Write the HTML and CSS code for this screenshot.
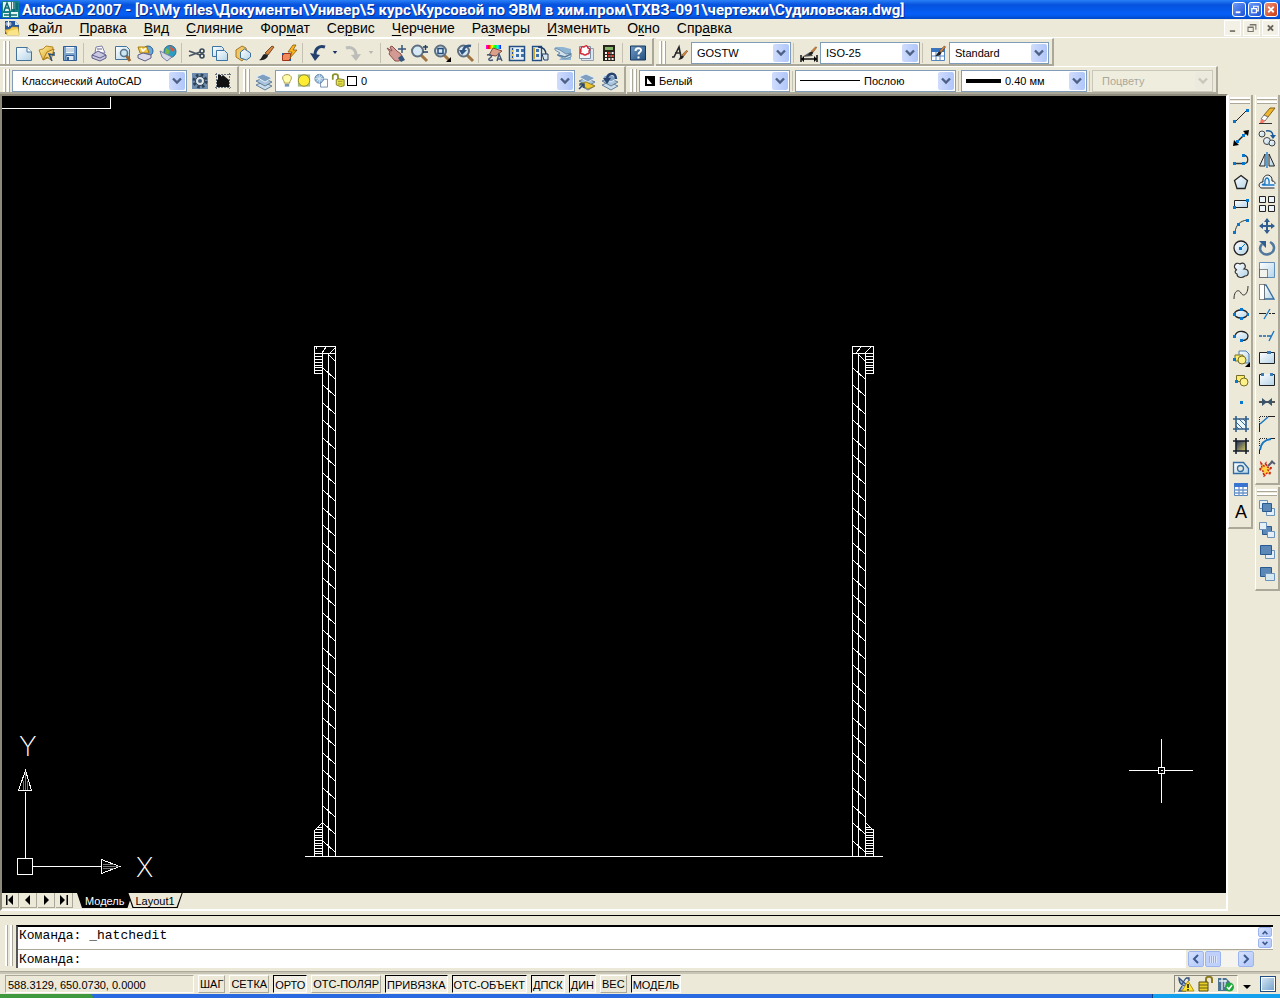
FILE: index.html
```html
<!DOCTYPE html>
<html lang="ru">
<head>
<meta charset="utf-8">
<title>AutoCAD 2007</title>
<link rel="stylesheet" href="styles.css">
</head>
<body>
<svg class="defs" aria-hidden="true">
  <defs>
    <linearGradient id="paper" x1="0" y1="0" x2="1" y2="1"><stop offset="0" stop-color="#ffffff"/><stop offset="1" stop-color="#b4d4e8"/></linearGradient>
    <linearGradient id="steel" x1="0" y1="0" x2="1" y2="1"><stop offset="0" stop-color="#6f9ac6"/><stop offset="1" stop-color="#24507f"/></linearGradient>
    <linearGradient id="gold" x1="0" y1="0" x2="1" y2="1"><stop offset="0" stop-color="#fff3a0"/><stop offset="1" stop-color="#d79a1c"/></linearGradient>
    <linearGradient id="night" x1="0" y1="0" x2="1" y2="1"><stop offset="0" stop-color="#1a2c5c"/><stop offset="1" stop-color="#d8c860"/></linearGradient>
    <linearGradient id="rainbow"><stop offset="0" stop-color="#f0f"/><stop offset=".2" stop-color="#f00"/><stop offset=".4" stop-color="#ff0"/><stop offset=".6" stop-color="#0f0"/><stop offset=".8" stop-color="#0ff"/><stop offset="1" stop-color="#00f"/></linearGradient>
    <symbol id="chev" viewBox="0 0 10 8"><path d="M1 1.5l4 4 4-4" fill="none" stroke="currentColor" stroke-width="2.4"/></symbol>
    <symbol id="brush" viewBox="0 0 20 20"><path d="M9 10l7-7 2 1-6 8z" fill="#d9853b" stroke="#5a3418" stroke-width=".8"/><path d="M3 17c3-1 3-6 6-6l3 1c0 3-4 6-9 5z" fill="#222"/></symbol>
    <symbol id="lens" viewBox="0 0 20 20"><path d="M12 12l6 6" stroke="#a07440" stroke-width="3"/><circle cx="8.500" cy="8" r="5.500" fill="#d7e9f4" stroke="#5e6f80" stroke-width="2"/></symbol>
    <symbol id="sheets" viewBox="0 0 20 20"><path d="M2 14l7-3 9 4-7 4z" fill="#c9dcec" stroke="#657f9b"/><path d="M2 10l7-3 9 4-7 4z" fill="#a9c4dd" stroke="#657f9b"/><path d="M2 6l7-3 9 4-7 4z" fill="#7f9fc1" stroke="#e2eef6"/></symbol>
  </defs>
</svg>

<header class="titlebar">
  <svg class="app-icon" viewBox="0 0 17 17"><path fill="#177f86" d="M0 0h17v17H0z"/><path fill="#e5f5f2" d="M1 1h8v9H1zM10 1h3v7h-3zM1 12h6v4H1zM9 11h7v5H9z"/><path d="M2 10l3-8 3 8M3 7h4M12 1v10M15 2v7M2 14h13" fill="none" stroke="#0a6971" stroke-width="1.500"/></svg>
  <h1>AutoCAD 2007 - [D:\My files\Документы\Универ\5 курс\Курсовой по ЭВМ в хим.пром\ТХВЗ-091\чертежи\Судиловская.dwg]</h1>
  <div class="window-buttons">
    <button aria-label="Свернуть"><svg viewBox="0 0 13 13"><path d="M3 9.500h5" stroke="#fff" stroke-width="2"/></svg></button>
    <button aria-label="Восстановить"><svg viewBox="0 0 13 13"><path d="M5 5V3h5v5H8M3 5.500h5V10H3z" fill="none" stroke="#fff" stroke-width="1.300"/></svg></button>
    <button class="close" aria-label="Закрыть"><svg viewBox="0 0 13 13"><path d="M3.500 3.500l6 6m0-6l-6 6" stroke="#fff" stroke-width="2"/></svg></button>
  </div>
</header>

<nav class="menubar">
  <svg class="doc-icon" viewBox="0 0 16 16"><path d="M1 1h10l4 4v9H1z" fill="#28569a"/><path d="M11 1l4 4h-4z" fill="#dbe8f4"/><path d="M4.500 1v6M1.500 4h6M2.500 2l4 4M6.500 2l-4 4" stroke="#fff"/><path d="M1 10l5-1 2-2h6l1 8H3z" fill="#f3cd50" stroke="#b98e20" stroke-width=".6"/><path d="M3 15l2-4 9-2 1 6z" fill="#fae48a"/></svg>
  <button><u>Ф</u>айл</button><button><u>П</u>равка</button><button><u>В</u>ид</button><button><u>С</u>лияние</button><button>Фор<u>м</u>ат</button><button>Се<u>р</u>вис</button><button><u>Ч</u>ерчение</button><button>Ра<u>з</u>меры</button><button><u>И</u>зменить</button><button>О<u>к</u>но</button><button>Спр<u>а</u>вка</button>
  <div class="doc-buttons">
    <button aria-label="Свернуть чертёж"><svg viewBox="0 0 16 16"><path d="M5 11.500h6" stroke="#77756b" stroke-width="2"/></svg></button>
    <button aria-label="Восстановить чертёж"><svg viewBox="0 0 16 16"><path d="M6 4h7v6M6 4.500h7M4 7h6v5H4zM4 7.500h6" fill="none" stroke="#77756b" stroke-width="1.200"/></svg></button>
    <button aria-label="Закрыть чертёж"><svg viewBox="0 0 16 16"><path d="M5 5l6 6m0-6l-6 6" stroke="#66645c" stroke-width="2.200"/></svg></button>
  </div>
</nav>

<div class="toolrow">
  <div class="toolbar">
    <i class="grip"></i>
    <button class="tool" aria-label="Создать"><svg viewBox="0 0 20 20"><path d="M2.500 4.500h11l4 4v9h-15z" fill="url(#paper)" stroke="#44749c"/><path d="M13 4v5h5" fill="#fff" stroke="#44749c"/></svg></button>
    <button class="tool" aria-label="Открыть"><svg viewBox="0 0 20 20"><path d="M2 7l4-1 3-3 7 1-1 9-9 4z" fill="url(#gold)" stroke="#b98922"/><path d="M6 17l4-8 7-3-3 11-4-3z" fill="#f6d578" stroke="#a9781a"/><path d="M17 9v3l-5-1 3 7" fill="none" stroke="#2b4f7c" stroke-width="1.500"/></svg></button>
    <button class="tool" aria-label="Сохранить"><svg viewBox="0 0 20 20"><path d="M3.500 3.500h13v14h-13z" fill="#7fa5cf" stroke="#2f5e96"/><path d="M6 4h8v6H6z" fill="#f2f7fb"/><path d="M6 6h8M6 8h8" stroke="#9bb5cd"/><path d="M6 12.500h8v5H6z" fill="#dfe9f2" stroke="#2f5e96"/><path d="M8 14v3" stroke="#2f5e96" stroke-width="2"/></svg></button>
    <i class="sep"></i>
    <button class="tool" aria-label="Печать"><svg viewBox="0 0 20 20"><path d="M6 10l1-6 6-1 3 7z" fill="#fff" stroke="#7c7fa5"/><path d="M3 12l6-4 8 4v3l-6 3-8-3z" fill="#c9c8e0" stroke="#5c5d8a"/><path d="M3 12l8 3 6-3M8 6h5" fill="none" stroke="#5c5d8a"/></svg></button>
    <button class="tool" aria-label="Просмотр"><svg viewBox="0 0 20 20"><path d="M3.500 3.500h11l3 3v10h-14z" fill="url(#paper)" stroke="#44749c"/><path d="M14 12l4 6" stroke="#9c6530" stroke-width="3"/><circle cx="12" cy="10" r="3.500" fill="#cfe5f1" stroke="#56758d" stroke-width="1.500"/></svg></button>
    <button class="tool" aria-label="Публикация"><svg viewBox="0 0 20 20"><circle cx="13" cy="8" r="5" fill="#6ca6d6" stroke="#255f99"/><path d="M3 4h9l2 6H5z" fill="#f3c944" stroke="#a67c12"/><path d="M6 5l2 3 3-3" fill="none" stroke="#fff" stroke-width="1.500"/><path d="M3 12l5-2 8 2v3l-6 3-7-3z" fill="#dcdce8" stroke="#5c5d8a"/></svg></button>
    <button class="tool" aria-label="Веб-публикация"><svg viewBox="0 0 20 20"><circle cx="12" cy="8.500" r="6" fill="#2e9cc6" stroke="#2e6b8c"/><path d="M12 3l5 4-4 2z" fill="#e8502f"/><path d="M8 5l4 3-2 4-3-2z" fill="#75bb46"/><path d="M2 8l6 3 6 3-5 4-5-4z" fill="#d6d9e6" stroke="#7780a2"/></svg></button>
    <i class="sep"></i>
    <button class="tool" aria-label="Вырезать"><svg viewBox="0 0 20 20"><path d="M2 8l11 4M2 13l11-4" stroke="#4b5664" stroke-width="1.600"/><circle cx="15" cy="8" r="2" fill="none" stroke="#38485c" stroke-width="1.600"/><circle cx="15" cy="13" r="2" fill="none" stroke="#38485c" stroke-width="1.600"/></svg></button>
    <button class="tool" aria-label="Копировать"><svg viewBox="0 0 20 20"><path d="M2.500 3.500h9l2 2v8h-11z" fill="url(#paper)" stroke="#3d74a6"/><path d="M6.500 7.500h8l3 3v7h-11z" fill="url(#paper)" stroke="#3d74a6"/></svg></button>
    <button class="tool" aria-label="Вставить"><svg viewBox="0 0 20 20"><path d="M3 7l6-4 4 2 1 7-5 6-6-4z" fill="#efc663" stroke="#a57724"/><path d="M7.500 9l4-3 6 4v4l-4 3-6-2z" fill="url(#paper)" stroke="#3d6f9d"/></svg></button>
    <button class="tool" aria-label="Копировать свойства"><svg viewBox="0 0 20 20"><use href="#brush"/></svg></button>
    <button class="tool" aria-label="Редактор блоков"><svg viewBox="0 0 20 20"><path d="M3.500 10.500h8v7h-8z" fill="#f08a5c" stroke="#a33117"/><path d="M3 10h2v2H3zM10 16h2v2h-2z" fill="#1c5fb0"/><path d="M14 2l-5 7h4l-2 6 7-8h-4l3-5z" fill="#ffb51d" stroke="#875a0c" stroke-width=".8"/></svg></button>
    <i class="sep"></i>
    <button class="tool" aria-label="Отменить"><svg viewBox="0 0 20 20"><path d="M17 4c-6-2-10 2-10 8" fill="none" stroke="#24406f" stroke-width="3"/><path d="M2 10l5 8 5-6z" fill="#24406f"/></svg></button>
    <button class="more" aria-label="Список отмены"><svg viewBox="0 0 8 6"><path d="M1 1h6L4 5z" fill="#183066"/></svg></button>
    <button class="tool" aria-label="Вернуть" disabled><svg viewBox="0 0 20 20"><path d="M3 5c6-2 10 2 10 7" fill="none" stroke="#bcbcb8" stroke-width="3"/><path d="M18 11l-5 7-5-6z" fill="#bcbcb8"/></svg></button>
    <button class="more wide" aria-label="Список возврата" disabled><svg viewBox="0 0 8 6"><path d="M1 1h6L4 5z" fill="#b9b8b0"/></svg></button>
    <i class="sep"></i>
    <button class="tool" aria-label="Панорамирование"><svg viewBox="0 0 20 20"><path d="M1 5l5 3-2-4 2-1 5 5 4 3 1 5-3 2H9L3 11l1-2z" fill="#d29a93" stroke="#8c4f4c"/><path d="M12 15l4-3 3 5-4 2z" fill="#34567e"/><path d="M16 2v8M12 6h8" stroke="#34567e" stroke-width="1.500"/></svg></button>
    <button class="tool" aria-label="Зумирование"><svg viewBox="0 0 20 20"><use href="#lens"/><path d="M14 4h5M16.500 2v5M14 9h5" stroke="#243f63" stroke-width="1.400"/></svg></button>
    <button class="tool" aria-label="Зумирование рамкой"><svg viewBox="0 0 20 20"><use href="#lens"/><path d="M6 5.500h5v5H6z" fill="none" stroke="#244a79" stroke-width="1.500"/><path d="M19 14v5h-5z"/></svg></button>
    <button class="tool" aria-label="Предыдущий вид"><svg viewBox="0 0 20 20"><use href="#lens"/><path d="M16 3c-4-1-7 1-8 5" fill="none" stroke="#315480" stroke-width="2.500"/><path d="M4 7h8l-5 5z" fill="#315480"/></svg></button>
    <i class="sep"></i>
    <button class="tool" aria-label="Свойства"><svg viewBox="0 0 20 20"><path d="M2 2h15v4H2z" fill="url(#rainbow)"/><path d="M5 12l4-7 9 3-6 5z" fill="#dca08a" stroke="#7b4b40"/><path d="M3 12c4-1 6 1 3 3s0 3 3 2M13 18l2-7 3 7M14 16h3" fill="none" stroke="#3e5573" stroke-width="1.400"/></svg></button>
    <button class="tool" aria-label="Центр управления"><svg viewBox="0 0 20 20"><path d="M2.500 3.500h15v14h-15z" fill="#e7f0f7" stroke="#244f82" stroke-width="1.500"/><path d="M4 5h3v11H4z" fill="#ecc858"/><path d="M5.500 5v11" stroke="#244f82" stroke-dasharray="2 2"/><path d="M9 6h3v3H9zm5 0h3v3h-3zM9 11h3v3H9zm5 0h3v3h-3z" fill="#3d72ab"/></svg></button>
    <button class="tool" aria-label="Палитры инструментов"><svg viewBox="0 0 20 20"><path d="M2.500 3.500h9v14h-9z" fill="#e7f0f7" stroke="#244f82" stroke-width="1.300"/><path d="M4 5v11" stroke="#cda532" stroke-width="2"/><path d="M6 6h3v3H6zm0 5h3v3H6z" fill="#3d72ab"/><path d="M8 4c6 0 8 3 8 8" fill="none" stroke="#1f3d67" stroke-width="1.500"/><path d="M12 11h6v6h-4z" fill="#d9e6ef" stroke="#1f3d67"/></svg></button>
    <button class="tool" aria-label="Подшивки"><svg viewBox="0 0 20 20"><path d="M2 4h8l8 2v11H6l4-4z" fill="#8fb3d3"/><path d="M2 5l5 2 6 4 5-1v4l-6 2-8-4 3-2-5-3z" fill="#d5e2ea" stroke="#6b90ad"/><path d="M5 12l7 2 6-3" fill="none" stroke="#567b9c" stroke-width="1.500"/></svg></button>
    <button class="tool" aria-label="Пометки"><svg viewBox="0 0 20 20"><path d="M5.500 5.500h12v12h-12z" fill="#dce8f1" stroke="#9a9da8"/><path d="M3.500 3.500h11v12h-11z" fill="#f1f5f8" stroke="#7a8da5"/><path d="M5 6q0-3 3-2 3-3 4 1 3 1 1 3 1 3-2 3-2 2-4 0-4 0-2-3-1-1 0-2z" fill="#fff" stroke="#d32835" stroke-width="1.500"/></svg></button>
    <button class="tool" aria-label="Калькулятор"><svg viewBox="0 0 20 20"><path d="M4 2h12v16H4z" fill="#29231f"/><path d="M6 4h8v3H6z" fill="#82b565"/><path d="M6 10h9M6 13h9M6 16h9" stroke="#f3f1e8" stroke-width="2" stroke-dasharray="2 1.300"/><path d="M9 10h2M9 13h2M13 13h2" stroke="#d83125" stroke-width="2"/></svg></button>
    <i class="sep"></i>
    <button class="tool" aria-label="Справка"><svg viewBox="0 0 20 20"><path d="M2.500 3h15v14h-15z" fill="url(#steel)" stroke="#17365e"/><path d="M7.500 8c0-4 6-3.500 5.500-.5-.2 1.600-2.500 1.700-2.500 4" fill="none" stroke="#fff" stroke-width="2"/><path d="M9.500 13.500h2v2h-2z" fill="#fff"/></svg></button>
  </div>
  <div class="toolbar styles">
    <i class="grip"></i>
    <button class="tool" aria-label="Текстовые стили"><svg viewBox="0 0 20 20"><path d="M2 14h2L9 4l2 10M5 10h6" fill="none" stroke="#26282c" stroke-width="1.600"/><use href="#brush" x="6" y="5" width="13" height="14"/></svg></button>
    <div class="combo w100"><select aria-label="Текстовый стиль"><option>GOSTW</option></select><svg class="drop"><use href="#chev"/></svg></div>
    <i class="sep"></i>
    <button class="tool" aria-label="Размерные стили"><svg viewBox="0 0 20 20"><path d="M2 12v7M18 12v7M2 16h16" stroke="#111" stroke-width="1.500"/><path d="M5 13l-3 3 3 3zM15 13l3 3-3 3z"/><path d="M3 14l8-5 3 4z" fill="#555"/><use href="#brush" x="7" y="1" width="12" height="14"/></svg></button>
    <div class="combo w100"><select aria-label="Размерный стиль"><option>ISO-25</option></select><svg class="drop"><use href="#chev"/></svg></div>
    <i class="sep"></i>
    <button class="tool" aria-label="Стили таблиц"><svg viewBox="0 0 20 20"><path d="M3.500 5.500h13v12h-13z" fill="#fff" stroke="#5484bd"/><path d="M3 5h14v4H3z" fill="#3975bf"/><path d="M3 13h14M8 9v8M12 9v8" stroke="#5484bd"/><use href="#brush" x="5" y="1" width="14" height="14"/></svg></button>
    <div class="combo w100"><select aria-label="Стиль таблиц"><option>Standard</option></select><svg class="drop"><use href="#chev"/></svg></div>
  </div>
</div>

<div class="toolrow lower">
  <div class="toolbar">
    <i class="grip"></i>
    <div class="combo w176"><select aria-label="Рабочее пространство"><option>Классический AutoCAD</option></select><svg class="drop"><use href="#chev"/></svg></div>
    <button class="tool" aria-label="Параметры рабочего пространства"><svg viewBox="0 0 20 20"><path d="M2 2h16v16H2z" fill="#6d8cae"/><circle cx="10" cy="10" r="6" fill="none" stroke="#2f4256" stroke-width="3" stroke-dasharray="2.500 2.200"/><circle cx="10" cy="10" r="4.500" fill="#dfe6ea" stroke="#2f4256"/><circle cx="10" cy="10" r="2" fill="#48637f"/></svg></button>
    <button class="tool" aria-label="Моё рабочее пространство"><svg viewBox="0 0 20 20"><path d="M3.500 2v16M16.500 2v16M2 3.500h16M2 16.500h16" stroke="#66747f" stroke-dasharray="2 1"/><path d="M4 9l6-5 6 5v7H4z" fill="#111"/><path d="M5 4h3v4H5z" fill="#111"/></svg></button>
  </div>
  <div class="toolbar layers">
    <i class="grip"></i>
    <button class="tool" aria-label="Диспетчер слоёв"><svg viewBox="0 0 20 20"><use href="#sheets"/></svg></button>
    <div class="combo layer">
      <svg class="mini" viewBox="0 0 16 16"><path d="M5 11c0-3-2-3-2-6 0-5 10-5 10 0 0 3-2 3-2 6z" fill="#fffcae" stroke="#9d8b3c"/><path d="M5.500 12h5v3h-5z" fill="#7896b5"/></svg>
      <svg class="mini" viewBox="0 0 16 16"><path d="M1 1h14v14H1z" fill="#a4bd8b"/><circle cx="8" cy="8" r="6.500" fill="#ffed34" stroke="#8c822b"/></svg>
      <svg class="mini" viewBox="0 0 16 16"><path d="M7.500 6.500h8v9h-8z" fill="#fff" stroke="#6b86a5"/><circle cx="6" cy="6" r="5" fill="#8fb4d4" stroke="#587ba2"/><path d="M6 1v10M1 6h10M3 3l6 6M9 3L3 9" stroke="#e0ebf3"/></svg>
      <svg class="mini" viewBox="0 0 16 16"><path d="M2 7V3c0-3 6-3 6 0v5" fill="none" stroke="#8c902a" stroke-width="2"/><path d="M6 7l3-1 6 1v7l-4 1-5-2z" fill="#e6df46" stroke="#777821"/><path d="M8 9h5M8 12h5" stroke="#969330"/></svg>
      <i class="swatch"></i>
      <select aria-label="Слой"><option>0</option></select><svg class="drop"><use href="#chev"/></svg></div>
    <button class="tool" aria-label="Слой объекта"><svg viewBox="0 0 20 20"><use href="#sheets"/><path d="M2 13l7-2 9 4-7 3z" fill="#efc72c" stroke="#98852b"/><path d="M2 18l5-5M3 13h4v4" fill="none" stroke="#244775" stroke-width="1.500"/></svg></button>
    <button class="tool" aria-label="Предыдущий слой"><svg viewBox="0 0 20 20"><use href="#sheets"/><path d="M16 8c0-7-8-7-9 0" fill="none" stroke="#26446f" stroke-width="2.500"/><path d="M3 7h8l-4 6z" fill="#26446f"/></svg></button>
  </div>
  <div class="toolbar props">
    <i class="grip"></i>
    <div class="combo color">
      <svg class="tone" viewBox="0 0 10 10"><path d="M0 0h10v10H0z"/><path d="M3 2h5v6z" fill="#fff" transform="matrix(-1 0 0 -1 10 10)"/></svg>
      <select aria-label="Цвет"><option>Белый</option></select><svg class="drop"><use href="#chev"/></svg></div>
    <i class="sep"></i>
    <div class="combo linetype"><i class="thin-line"></i><select aria-label="Тип линии"><option>Послою</option></select><svg class="drop"><use href="#chev"/></svg></div>
    <i class="sep"></i>
    <div class="combo weight"><i class="thick-line"></i><select aria-label="Вес линии"><option>0.40 мм</option></select><svg class="drop"><use href="#chev"/></svg></div>
    <i class="sep"></i>
    <div class="combo plot off"><select aria-label="Стиль печати" disabled><option>Поцвету</option></select><svg class="drop"><use href="#chev"/></svg></div>
  </div>
</div>

<main class="workspace">
  <section class="viewport">
    <svg class="drawing" role="img" aria-label="Чертёж">
      <g transform="translate(-1.500 -95.500)" fill="none" stroke="#fff" shape-rendering="crispEdges">
        <path d="M1 108h109V96"/>
        <path d="M304 856h578"/>
        <g id="wall">
          <path d="M322 353v503M328 353v503M335 353v503M328 354l7 7"/>
          <path d="M322 367l13 12M322 384l13 12M322 402l13 12M322 419l13 12M322 437l13 12M322 454l13 12M322 472l13 12M322 489l13 12M322 507l13 12M322 524l13 12M322 542l13 12M322 559l13 12M322 577l13 12M322 594l13 12M322 612l13 12M322 629l13 12M322 647l13 12M322 664l13 12M322 682l13 12M322 699l13 12M322 717l13 12M322 734l13 12M322 752l13 12M322 769l13 12M322 787l13 12M322 805l13 12M322 822l13 12M322 840l13 12"/>
        </g>
        <use href="#wall" x="530"/>
        <path d="M314 346h21v7h-21zM315 349l2-3M321 353l5-7M329 353l6-6M852 346h21v7h-21zM855 353l6-7M864 353l7-7"/>
        <g id="rings"><path d="M314 356h8M314 359h8M314 362h8M314 365h8M314 367h8M314 370h8M314 373h8M314 829h8M314 832h8M314 835h8M314 837h8M314 840h8M314 843h8M314 845h8M314 848h8M314 851h8M314 853h8"/></g>
        <use href="#rings" x="551"/>
        <path d="M314 353v20M314 856v-26l8-8M317 827h5M873 353v20M873 856v-26l-8-8M865 827h5"/>
        <path d="M17 858h15v16H17zM25 858v-67M32 866h68M18 790h13l-6-20zM101 859v14l18-7z"/>
        <path d="M23 789v-9M27 789v-9M25 789v-18M102 864h11M102 868h11M102 866h16" stroke="#777"/>
        <path d="M1128 770h30M1164 770h28M1161 738v29M1161 773v29M1158 767h6v6h-6zM1160 770h2"/>
      </g>
      <g class="axis"><text x="17" y="660">Y</text><text x="134" y="781">X</text></g>
    </svg>
    <div class="tabs">
      <button class="nav" aria-label="Первый лист"><svg viewBox="0 0 12 12"><path d="M2 1h1.500v10H2zM9 1v10L4 6z"/></svg></button>
      <button class="nav" aria-label="Предыдущий лист"><svg viewBox="0 0 12 12"><path d="M8 1v10L3 6z"/></svg></button>
      <button class="nav" aria-label="Следующий лист"><svg viewBox="0 0 12 12"><path d="M4 1v10l5-5z"/></svg></button>
      <button class="nav" aria-label="Последний лист"><svg viewBox="0 0 12 12"><path d="M2 1v10l5-5zM8.500 1H10v10H8.500z"/></svg></button>
      <button class="tab model"><span>Модель</span></button>
      <button class="tab layout"><span>Layout1</span></button>
    </div>
  </section>
  <aside class="docks">
    <div class="dock">
      <i class="hgrip"></i>
      <button aria-label="Отрезок"><svg viewBox="0 0 18 18"><path d="M3 15L15 3" stroke="#222"/><path d="M1 13h3v3H1zM14 2h3v3h-3z" fill="#0877cf"/></svg></button>
      <button aria-label="Прямая"><svg viewBox="0 0 18 18"><path d="M3 15L15 3" stroke="#222" stroke-width="1.500"/><path d="M1 17l1-6 5 5zM17 1l-6 1 5 5z"/><path d="M4 11h3v3H4zM10 5h3v3h-3z" fill="#0877cf"/></svg></button>
      <button aria-label="Полилиния"><svg viewBox="0 0 18 18"><path d="M3 12.500h9c5 0 5-8 0-8" fill="none" stroke="#333" stroke-width="1.300"/><path d="M1 11h3v3H1zM10 3h3v3h-3zM10 11h3v3h-3z" fill="#0877cf"/></svg></button>
      <button aria-label="Многоугольник"><svg viewBox="0 0 18 18"><path d="M9 2.500l6.500 5-2.500 8H5l-2.500-8z" fill="url(#paper)" stroke="#222" stroke-width="1.300"/></svg></button>
      <button aria-label="Прямоугольник"><svg viewBox="0 0 18 18"><path d="M2.500 5.500h13v7h-13z" fill="url(#paper)" stroke="#222"/><path d="M1 11h3v3H1zM14 4h3v3h-3z" fill="#0877cf"/></svg></button>
      <button aria-label="Дуга"><svg viewBox="0 0 18 18"><path d="M3 15C4 8 8 4 15 3" fill="none" stroke="#333"/><path d="M1 14h3v3H1zM5 6h3v3H5zM14 2h3v3h-3z" fill="#0877cf"/></svg></button>
      <button aria-label="Круг"><svg viewBox="0 0 18 18"><circle cx="9" cy="9" r="7" fill="url(#paper)" stroke="#222" stroke-width="1.300"/><path d="M9 9l4-4" stroke="#0877cf"/><path d="M7 8h3v3H7z" fill="#0877cf"/></svg></button>
      <button aria-label="Облако"><svg viewBox="0 0 18 18"><path d="M5 9C0 7 3 0 8 3c4-3 7 2 4 5 6 0 5 7 1 7-4 3-8 1-8-2-3-1-2-4 0-4z" fill="url(#paper)" stroke="#333" stroke-width="1.200"/></svg></button>
      <button aria-label="Сплайн"><svg viewBox="0 0 18 18"><path d="M2 16C2 7 7 6 9 10s7 2 7-7" fill="none" stroke="#333"/></svg></button>
      <button aria-label="Эллипс"><svg viewBox="0 0 18 18"><ellipse cx="9" cy="9" rx="6.500" ry="4" fill="url(#paper)" stroke="#222" stroke-width="1.300"/><path d="M1 8h3v3H1zM8 3h3v3H8zM8 12h3v3H8zM15 8h2v3h-2z" fill="#0877cf"/></svg></button>
      <button aria-label="Эллиптическая дуга"><svg viewBox="0 0 18 18"><path d="M3 9c2-7 13-5 13 0 0 4-4 5-7 4" fill="url(#paper)" stroke="#222" stroke-width="1.300"/><path d="M1 8h3v3H1zM8 12h3v3H8z" fill="#0877cf"/></svg></button>
      <button aria-label="Вставить блок"><svg viewBox="0 0 18 18"><path d="M7 2h7l3 3v9H7z" fill="url(#paper)" stroke="#4c7db0"/><path d="M3 6h8v6H3z" fill="#ffed70" stroke="#766e28"/><circle cx="10" cy="11" r="4" fill="#fff18a" stroke="#766e28"/><path d="M1 9h3v3H1z" fill="#0877cf"/><path d="M18 13v5h-5z"/></svg></button>
      <button aria-label="Создать блок"><svg viewBox="0 0 18 18"><path d="M4.500 4.500h8v6h-8z" fill="#ffed70" stroke="#766e28"/><circle cx="12" cy="11" r="4" fill="#fff18a" stroke="#766e28"/><path d="M3 9h3v3H3z" fill="#0877cf"/></svg></button>
      <button aria-label="Точка"><svg viewBox="0 0 18 18"><path d="M8 8h3v3H8z" fill="#0877cf"/></svg></button>
      <button aria-label="Штриховка"><svg viewBox="0 0 18 18"><path d="M4 4h10v10H4z" fill="#e9f4fb"/><path d="M4 7l7 7M4 11l3 3M7 4l7 7M11 4l3 3" stroke="#3c6892"/><path d="M1 4h16M1 14h16M4 1v16M14 1v16" stroke="#305d89" stroke-width="1.600"/></svg></button>
      <button aria-label="Градиент"><svg viewBox="0 0 18 18"><path d="M4 4h10v10H4z" fill="url(#night)"/><path d="M1 4h16M1 14h16M4 1v16M14 1v16" stroke="#171d2b" stroke-width="1.600"/></svg></button>
      <button aria-label="Область"><svg viewBox="0 0 18 18"><path d="M1.500 3.500h10l5 6v5h-15z" fill="url(#paper)" stroke="#326b9f" stroke-width="1.300"/><circle cx="8.500" cy="9.500" r="3" fill="#e9e7da" stroke="#326b9f" stroke-width="1.300"/></svg></button>
      <button aria-label="Таблица"><svg viewBox="0 0 18 18"><path d="M2.500 2.500h13v12h-13z" fill="#fff" stroke="#5484bd"/><path d="M2 2h14v4H2z" fill="#3975d0"/><path d="M2 9h14M2 12h14M7 6v9M11 6v9" stroke="#6d96ca" stroke-width="1.300"/></svg></button>
      <button class="letter" aria-label="Многострочный текст">A</button>
    </div>
    <div class="dock-column">
      <div class="dock">
        <i class="hgrip"></i>
        <button aria-label="Стереть"><svg viewBox="0 0 18 18"><path d="M12 1h5l-7 9-4-2z" fill="#efb72c" stroke="#85611d"/><path d="M6 8l4 2-3 4-4-2z" fill="#fff" stroke="#777"/><path d="M3 12l4 2-2 2H2z" fill="#ff7563"/><path d="M1 16.500h13" stroke="#333"/></svg></button>
        <button aria-label="Копировать объект"><svg viewBox="0 0 18 18"><g fill="url(#paper)" stroke="#444"><circle cx="4" cy="5" r="3"/><circle cx="9" cy="12" r="3.500"/><circle cx="14" cy="14" r="3"/></g><path d="M8 2c4-1 7 1 7 5" fill="none" stroke="#1b5b9c" stroke-width="1.500"/><path d="M12 6h6l-3 4z" fill="#1b5b9c"/></svg></button>
        <button aria-label="Зеркало"><svg viewBox="0 0 18 18"><path d="M7 3v12H1.500zM11 3v12h5.500z" fill="url(#paper)" stroke="#222"/><path d="M9 1v16" stroke="#0877cf" stroke-width="1.300"/></svg></button>
        <button aria-label="Подобие"><svg viewBox="0 0 18 18"><path d="M16.500 15H4c-4 0-4-6 1-6C4 0 15 0 14 8c3 0 3 2 3 3" fill="#edf4f8" stroke="#222"/><path d="M16.500 12H5c-1 0-1-1 2-1C6 3 12 3 11 11" fill="none" stroke="#1676c3" stroke-width="1.300"/></svg></button>
        <button aria-label="Массив"><svg viewBox="0 0 18 18"><path d="M1.500 1.500h6v6h-6zM10.500 1.500h6v6h-6zM1.500 10.500h6v6h-6zM10.500 10.500h6v6h-6z" fill="#edf4f8" stroke="#222"/></svg></button>
        <button aria-label="Перенести"><svg viewBox="0 0 18 18"><path d="M9 2v14M2 9h14" stroke="#315e90" stroke-width="2"/><path d="M9 1l3 4H6zM9 17l-3-4h6zM1 9l4-3v6zM17 9l-4 3V6z" fill="#315e90"/></svg></button>
        <button aria-label="Повернуть"><svg viewBox="0 0 18 18"><path d="M4 5c-5 6 1 12 7 10s7-9 1-12" fill="none" stroke="#53789d" stroke-width="2.500"/><path d="M1 2h7v7z" fill="#315e90"/></svg></button>
        <button aria-label="Масштаб"><svg viewBox="0 0 18 18"><path d="M1.500 1.500h15v15h-15z" fill="url(#paper)" stroke="#6290ba"/><path d="M1.500 8.500h8v8h-8z" fill="#f2f3ed" stroke="#222" stroke-dasharray="1 1"/></svg></button>
        <button aria-label="Растянуть"><svg viewBox="0 0 18 18"><path d="M6 2h2l8 14H6z" fill="url(#paper)" stroke="#326b9f" stroke-width="1.300"/><path d="M1.500 1.500h5v15h-5z" fill="#fff" stroke="#222" stroke-dasharray="1 1"/></svg></button>
        <button aria-label="Обрезать"><svg viewBox="0 0 18 18"><path d="M1 8.500h7M11 8.500h2M14 8.500h3" stroke="#222"/><path d="M6 14l6-10" stroke="#1676c3" stroke-width="1.300"/></svg></button>
        <button aria-label="Удлинить"><svg viewBox="0 0 18 18"><path d="M1 9h3M5 9h3M9 9h4" stroke="#1b66a9" stroke-width="1.300"/><path d="M11 14l5-10" stroke="#1676c3" stroke-width="1.300"/></svg></button>
        <button aria-label="Разорвать в точке"><svg viewBox="0 0 18 18"><path d="M1.500 3.500h15v11h-15z" fill="url(#paper)" stroke="#222"/><path d="M9 2h4v3H9z" fill="#3d7db7"/></svg></button>
        <button aria-label="Разорвать"><svg viewBox="0 0 18 18"><path d="M1 3h16v11H1z" fill="url(#paper)"/><path d="M4 3.500H1.500v11h15v-11H14" fill="none" stroke="#222"/><path d="M3 2h3v3H3zM12 2h3v3h-3z" fill="#3d7db7"/></svg></button>
        <button aria-label="Соединить"><svg viewBox="0 0 18 18"><path d="M1 9h16" stroke="#222" stroke-width="1.500"/><path d="M4 5l5 4-5 4zM14 5L9 9l5 4z" fill="#38546d"/></svg></button>
        <button aria-label="Фаска"><svg viewBox="0 0 18 18"><path d="M1.500 17V9M10 1.500h7" stroke="#222"/><path d="M1.500 9V1.500H10" fill="none" stroke="#222" stroke-dasharray="1 1"/><path d="M2 9l8-7" stroke="#1676c3" stroke-width="1.500"/></svg></button>
        <button aria-label="Сопряжение"><svg viewBox="0 0 18 18"><path d="M1.500 17v-5M12 1.500h5" stroke="#222"/><path d="M1.500 9V1.500H10" fill="none" stroke="#222" stroke-dasharray="1 1"/><path d="M2 13C3 6 6 3 13 2" fill="none" stroke="#1676c3" stroke-width="2"/></svg></button>
        <button aria-label="Расчленить"><svg viewBox="0 0 18 18"><path d="M3 4l3 3 2-3 1 4 5 1-4 2 3 4-4-1-3 3-1-5-4-2 3-1z" fill="#ffd044" stroke="#cd2818" stroke-width="1.500" stroke-dasharray="2 1"/><path d="M10 7l5-5M13 2l4 3" stroke="#555c70" stroke-width="2"/></svg></button>
      </div>
      <div class="dock order">
        <i class="hgrip"></i>
        <button aria-label="На передний план"><svg viewBox="0 0 18 18"><path d="M1.500 1.500h8v8h-8zM8.500 9.500h8v7h-8z" fill="#e4eff7" stroke="#6b93ba"/><path d="M4.500 4.500h9v8h-9z" fill="#5b88b7" stroke="#285b92"/></svg></button>
        <button aria-label="На задний план"><svg viewBox="0 0 18 18"><path d="M4.500 5.500h9v8h-9z" fill="#5b88b7" stroke="#285b92"/><path d="M1.500 1.500h7v7h-7zM9.500 10.500h7v6h-7z" fill="#e4eff7" stroke="#6b93ba"/></svg></button>
        <button aria-label="Перед объектом"><svg viewBox="0 0 18 18"><path d="M7.500 7.500h9v8h-9z" fill="#e4eff7" stroke="#6b93ba"/><path d="M2.500 2.500h11v9h-11z" fill="#5b88b7" stroke="#285b92"/></svg></button>
        <button aria-label="За объектом"><svg viewBox="0 0 18 18"><path d="M2.500 2.500h11v9h-11z" fill="#5b88b7" stroke="#285b92"/><path d="M7.500 8.500h9v7h-9z" fill="#d6e7f1" stroke="#6b93ba"/></svg></button>
      </div>
    </div>
  </aside>
</main>

<section class="command">
  <i class="vgrip"></i>
  <div class="console">
    <div class="history">
      <output>Команда: _hatchedit</output>
      <div class="vscroll"><button aria-label="Вверх"><svg viewBox="0 0 10 6"><path d="M2 5l3-3 3 3" fill="none" stroke="#3d5a8e" stroke-width="2"/></svg></button><button aria-label="Вниз"><svg viewBox="0 0 10 6"><path d="M2 1l3 3 3-3" fill="none" stroke="#3d5a8e" stroke-width="2"/></svg></button></div>
    </div>
    <div class="prompt">
      <label for="cmd">Команда:</label><input id="cmd" type="text">
      <div class="hscroll"><button aria-label="Влево"><svg viewBox="0 0 10 10"><path d="M7 1L3 5l4 4" fill="none" stroke="#3d5a8e" stroke-width="2"/></svg></button><i class="thumb"></i><button class="right" aria-label="Вправо"><svg viewBox="0 0 10 10"><path d="M3 1l4 4-4 4" fill="none" stroke="#3d5a8e" stroke-width="2"/></svg></button></div>
    </div>
  </div>
</section>

<footer class="status">
  <div class="coords">588.3129, 650.0730, 0.0000</div>
  <button>ШАГ</button><button>СЕТКА</button><button class="on">ОРТО</button><button>ОТС-ПОЛЯР</button><button class="on">ПРИВЯЗКА</button><button class="on">ОТС-ОБЪЕКТ</button><button class="on">ДПСК</button><button class="on">ДИН</button><button>ВЕС</button><button class="on">МОДЕЛЬ</button>
  <div class="tray">
    <svg viewBox="0 0 18 16"><path d="M2 2c0 6 4 9 9 8zM9 2l-4 6M9 2h3v3M5 10l-3 5h7" fill="#9fb3d0" stroke="#34517f" stroke-width="1.300"/><path d="M11 5l6 10H5z" fill="#ffe42c" stroke="#b49418"/><path d="M11 8v4M11 13v1.500" stroke="#111" stroke-width="1.500"/></svg>
    <svg viewBox="0 0 18 16"><path d="M9 7V3c0-3 6-3 6 0v4" fill="none" stroke="#8c7b1c" stroke-width="2"/><path d="M2 6h9v9H2z" fill="#e9cf2a" stroke="#594d0c"/><path d="M2 9h9M2 12h9" stroke="#665b13"/></svg>
    <svg viewBox="0 0 18 16"><path d="M1 2h8l4 4v9H1z" fill="#4c7390"/><path d="M2 5h8M5 2v12M8 4v7" stroke="#e6f0f4" stroke-width="1.300"/><circle cx="12.500" cy="11" r="4.500" fill="#20a83e"/><path d="M10 11l2 2 3-4" fill="none" stroke="#fff" stroke-width="1.500"/></svg>
  </div>
  <button class="tray-menu" aria-label="Меню строки состояния"><svg viewBox="0 0 8 6"><path d="M0 1h8L4 5z"/></svg></button>
  <button class="clean" aria-label="Очистить экран"></button>
</footer>
<div class="taskbar"><i class="start"></i><i class="clock"></i></div>
</body>
</html>
```
FILE: styles.css
```css
* { box-sizing: border-box; }
html, body { height: 100%; }
body {
  margin: 0;
  display: flex;
  flex-direction: column;
  overflow: hidden;
  background: #ece9d8;
  color: #000;
  font: 11px/14px "Liberation Sans", Arial, sans-serif;
}
button, select, input { font: inherit; color: inherit; margin: 0; padding: 0; border: 0; background: none; border-radius: 0; }
svg { display: block; flex: none; }
i { display: block; flex: none; }
.defs { position: absolute; width: 0; height: 0; }

.titlebar { flex: none; height: 19px; display: flex; align-items: center; padding: 0 2px; background: linear-gradient(#2a80f8, #0652dd 25%, #0560f8 75%, #0048c8); }
.app-icon { width: 17px; height: 17px; }
.titlebar h1 { flex: 1; margin: 0 0 0 3px; color: #fff; font: bold 15px/18px Roboto, "Liberation Sans", sans-serif; text-shadow: 1px 1px 0 #0a2a80; white-space: nowrap; overflow: hidden; }
.window-buttons { display: flex; gap: 2px; }
.window-buttons button { width: 14px; height: 15px; border: 1px solid #fff; border-radius: 3px; background: linear-gradient(135deg, #6c9cf8, #1c4fd4); }
.window-buttons .close { background: linear-gradient(135deg, #f09078, #cc3c10); }
.window-buttons svg { width: 12px; height: 13px; }

.menubar { flex: none; height: 19px; display: flex; align-items: center; padding-left: 4px; border-bottom: 1px solid #fff; font: 14px/18px "Liberation Sans", Arial, sans-serif; }
.doc-icon { width: 16px; height: 16px; }
.menubar > button { padding: 0 9px 0 8px; white-space: nowrap; }
.menubar u { text-underline-offset: 2px; text-decoration-thickness: 1px; }
.doc-buttons { display: flex; gap: 2px; margin-left: auto; padding-right: 1px; }
.doc-buttons button { width: 17px; height: 16px; border: 1px solid #fff; background: #f3f1e6; }
.doc-buttons svg { width: 15px; height: 14px; }

.toolrow { flex: none; display: flex; gap: 2px; height: 28px; }
.toolrow.lower { gap: 1px; }
.toolbar { display: flex; align-items: center; height: 28px; padding: 2px 3px 0 0; border: solid; border-width: 1px 2px 2px 0; border-color: #fff #aca899 #aca899 #fff; }
.grip { width: 6px; height: 23px; margin: 0 3px; border: solid #fff; border-width: 0 2px; box-shadow: 1px 0 0 #aca899, inset 1px 0 0 #aca899; }
.tool { width: 23px; height: 22px; display: grid; place-items: center; flex: none; }
.tool svg { width: 20px; height: 20px; }
.more { width: 12px; height: 22px; display: grid; place-items: center; }
.more svg { width: 6px; height: 5px; }
.more.wide { width: 14px; }
.sep { width: 2px; height: 20px; margin: 0 2px; border-left: 1px solid #c5c2b4; }
.props .sep { margin: 0 1px 0 2px; }
.combo { position: relative; display: flex; align-items: center; height: 22px; padding: 1px; border: 1px solid #7f9db9; background: #fff; }
.combo select { appearance: none; flex: 1; min-width: 0; height: 18px; padding-left: 4px; outline: 0; }
.drop { width: 16px; height: 18px; padding: 5px 3px; color: #4d6185; border-radius: 2px; background: linear-gradient(90deg, #cfdcfc, #b0c6fa); }
.w100 { width: 100px; }
.w176 { width: 175px; margin-right: 1px; }
.w176 select { padding-left: 8px; }
.layer { width: 300px; }
.mini { width: 14px; height: 15px; margin: 0 0 0 3px; }
.swatch { width: 10px; height: 10px; margin-left: 2px; border: 1px solid #000; }
.color { width: 151px; }
.tone { width: 10px; height: 10px; margin-left: 4px; }
.linetype { width: 161px; }
.thin-line { width: 60px; height: 1px; margin-left: 3px; background: #000; }
.weight { width: 126px; }
.thick-line { width: 35px; height: 4px; margin-left: 3px; background: #000; }
.plot { width: 121px; }
.combo.off { background: #efedde; border-color: #c9c7ba; color: #aca899; }
.combo.off select { padding-left: 8px; opacity: 1; }
.off .drop { background: #eceade; color: #c9c7ba; }

.workspace { flex: 1; min-height: 0; display: flex; }
.viewport { flex: 1; min-width: 0; display: flex; flex-direction: column; border: 2px solid #8d8a7c; border-right-color: #fff; border-bottom-color: #fff; }
.drawing { flex: 1; min-height: 0; width: 100%; background: #000; }
.axis { fill: #fff; font: 200 27px Inter, Lato, sans-serif; }
.tabs { flex: none; height: 16px; display: flex; padding-bottom: 1px; }
.nav { width: 17px; height: 15px; margin-right: 1px; display: grid; place-items: center; border: solid; border-width: 0 1px 1px 0; border-color: #aca899; }
.nav svg { width: 12px; height: 12px; }
.tab { position: relative; height: 15px; line-height: 14px; background: #000; clip-path: polygon(0 0, 100% 0, calc(100% - 5px) 100%, 5px 100%); }
.tab span { position: relative; }
.model { margin-left: 3px; padding: 0 8px; color: #fff; }
.layout { margin-left: -5px; padding: 0 8px; }
.layout::before { content: ""; position: absolute; inset: 0 1px 1px; background: #ece9d8; clip-path: polygon(0 0, 100% 0, calc(100% - 5px) 100%, 5px 100%); }

.docks { flex: none; display: flex; align-items: flex-start; gap: 2px; padding-top: 1px; }
.dock-column { display: flex; flex-direction: column; gap: 2px; }
.dock { width: 25px; padding: 2px 0 4px; border: solid; border-width: 0 2px 2px 1px; border-color: #fff #aca899 #aca899 #fff; }
.dock button { display: grid; place-items: center; width: 24px; height: 22px; }
.dock-column .dock button { width: 22px; }
.dock svg { width: 18px; height: 18px; }
.hgrip { width: 20px; height: 6px; margin: 0 1px 2px; border: solid #fff; border-width: 2px 0; box-shadow: 0 1px 0 #aca899, inset 0 1px 0 #aca899; }
.dock .letter { font: 18px/22px "Liberation Sans", Arial, sans-serif; }

.command { flex: none; display: flex; margin-top: 4px; padding: 9px 7px 3px 5px; border-top: 1px solid #000; border-bottom: 1px solid #aca899; font: 13px/16px "Liberation Mono", "Courier New", monospace; }
.vgrip { width: 7px; height: 41px; margin-right: 4px; border: solid #fff; border-width: 0 2px; box-shadow: 1px 0 0 #aca899, inset 1px 0 0 #aca899; }
.console { flex: 1; min-width: 0; border-top: 2px solid #000; border-left: 2px solid #555; }
.history { display: flex; height: 23px; background: #fff; border-bottom: 1px solid #aca899; }
.history output { flex: 1; padding: 1px 0 0 1px; }
.vscroll { width: 16px; display: grid; grid-template-rows: 1fr 1fr; gap: 1px; padding: 0 1px 1px; }
.vscroll button, .hscroll button, .thumb { border: 1px solid #9db5ee; border-radius: 2px; background: linear-gradient(135deg, #d5e0fd, #b2c8fa); display: grid; place-items: center; }
.vscroll svg { width: 8px; height: 5px; }
.prompt { display: flex; height: 18px; background: linear-gradient(#fff, #fff) left / calc(100% - 87px) 100% no-repeat; }
.prompt label { padding: 2px 0 0 1px; }
.prompt input { flex: 1; min-width: 0; outline: 0; }
.hscroll { display: flex; gap: 1px; width: 66px; margin: 1px 19px 1px 0; background: #f5f4ef; }
.hscroll button, .thumb { width: 16px; height: 16px; }
.hscroll svg { width: 10px; height: 10px; }
.thumb { background: repeating-linear-gradient(90deg, #96b0ee 0 1px, #dce6fe 1px 2px) center / 8px 7px no-repeat, #bfd0fb; }
.hscroll .right { margin-left: auto; }

.status { flex: none; display: flex; align-items: center; gap: 4px; height: 22px; padding: 2px 4px 2px 5px; border-top: 2px solid #c8c5b6; }
.coords { width: 189px; height: 18px; padding: 1px 2px; border: 1px solid; border-color: #aca899 #fff #fff #aca899; line-height: 16px; }
.status > button { height: 18px; padding: 0 1px; border: 1px solid; border-color: #fff #aca899 #aca899 #fff; line-height: 16px; white-space: nowrap; }
.status > .on { border-color: #000 #fff #fff #000; background: #f2f0e6; padding-top: 1px; }
.tray { margin-left: auto; display: flex; gap: 2px; height: 18px; padding: 0 2px; border: 1px solid; border-color: #8d8a7c #fff #fff #8d8a7c; }
.tray svg { width: 18px; height: 16px; }
.status > .tray-menu { border: 0; padding: 6px 5px 0 1px; }
.tray-menu svg { width: 8px; height: 6px; }
.status > .clean { width: 16px; height: 16px; border: 1px solid #1d4f86; box-shadow: inset 0 0 0 1px #fff; background: linear-gradient(135deg, #dbeaf5, #6f9fc9); }

.taskbar { flex: none; display: flex; justify-content: space-between; height: 4px; background: #2a6ae0; }
.start { width: 93px; background: #3f9a3f; border-radius: 0 4px 0 0; }
.clock { width: 128px; background: #15a0ee; border-left: 1px solid #0a3f8c; }
```
